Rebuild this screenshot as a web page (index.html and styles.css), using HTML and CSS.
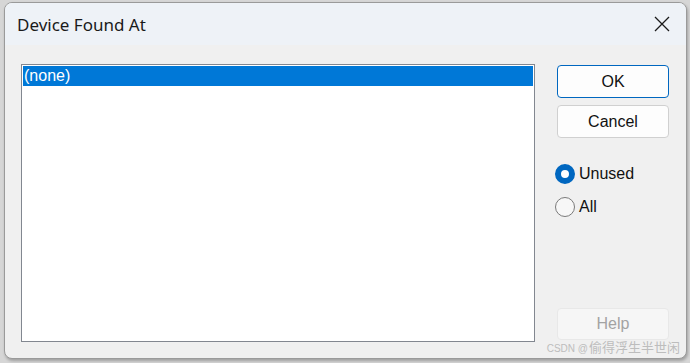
FILE: index.html
```html
<!DOCTYPE html>
<html lang="en">
<head>
    <meta charset="UTF-8">
    <title>Device Found At</title>
    <link rel="stylesheet" href="styles.css">
</head>
<body>
    <section class="window">
        <div class="title_bar">
            <span class="title">Device Found At</span>
            <button class="close" aria-label="Close">
                <svg width="16" height="16" viewBox="0 0 16 16">
                    <path d="M1 1 L15 15 M15 1 L1 15" stroke="#1a1a1a" stroke-width="1.3" fill="none"/>
                </svg>
            </button>
        </div>

        <div class="content">
            <div class="list_box">
                <div class="list_item selected">(none)</div>
            </div>

            <div class="side">
                <button class="btn default">OK</button>
                <button class="btn">Cancel</button>

                <div class="radios">
                    <label class="radio"><span class="dot checked"></span>Unused</label>
                    <label class="radio"><span class="dot"></span>All</label>
                </div>

                <button class="btn help" disabled>Help</button>
            </div>
        </div>

        <span class="watermark">CSDN @<span class="cjk">偷得浮生半世闲</span></span>
    </section>
</body>
</html>
```

FILE: styles.css
```css
*{
    margin: 0;
    padding: 0;
    box-sizing: border-box;
}

body{
    background: #d6d6d6;
    width: 690px;
    height: 363px;
    overflow: hidden;
    font-family: "Liberation Sans", Arial, sans-serif;
}

.window{
    position: relative;
    margin: 2px 0 0 4px;
    width: 683px;
    height: 357px;
    border: 1px solid #9a9a9a;
    border-radius: 8px;
    background: #f0f0f0;
    overflow: hidden;
    box-shadow: 1px 2px 3px rgba(0, 0, 0, 0.25);
}

.title_bar{
    height: 42px;
    background: #eef2f7;
    display: flex;
    align-items: center;
    justify-content: space-between;
    padding: 0 16px 0 12px;
}

.title{
    font-family: "Noto Sans", sans-serif;
    font-size: 17px;
    color: #1a1a1a;
    padding-top: 1px;
}

.close{
    border: none;
    background: none;
    width: 16px;
    height: 16px;
    display: flex;
}

.content{
    display: grid;
    grid-template-columns: 514px 112px;
    column-gap: 22px;
    padding: 19px 18px 16px 16px;
    height: 313px;
}

.list_box{
    border: 1px solid #828790;
    background: #ffffff;
    padding: 1px;
}

.list_item{
    height: 20px;
    line-height: 20px;
    font-size: 16px;
    color: #000;
    padding-left: 1px;
}

.list_item.selected{
    background: #0078d7;
    color: #ffffff;
}

.side{
    display: flex;
    flex-direction: column;
    padding-top: 1px;
    padding-bottom: 2px;
}

.btn{
    font-family: "Liberation Sans", Arial, sans-serif;
    font-size: 16px;
    color: #111;
    height: 33px;
    background: #fdfdfd;
    border: 1px solid #d0d0d0;
    border-radius: 4px;
}

.btn.default{
    border-color: #0067c0;
    margin-bottom: 7px;
}

.btn.help{
    margin-top: auto;
    height: 32px;
    background: #f6f6f6;
    border-color: #e8e8e8;
    color: #a3a3a3;
}

.radios{
    display: flex;
    flex-direction: column;
    row-gap: 13px;
    margin-top: 26px;
}

.radio{
    display: flex;
    align-items: center;
    font-size: 16px;
    color: #111;
    margin-left: -2px;
}

.dot{
    width: 20px;
    height: 20px;
    border-radius: 50%;
    border: 1px solid #7a7a7a;
    background: #f7f7f7;
    margin-right: 4px;
}

.dot.checked{
    border: 6px solid #0067c0;
    background: #ffffff;
}

.watermark{
    position: absolute;
    right: 6px;
    bottom: 2px;
    font-family: "Liberation Sans", sans-serif;
    font-size: 10px;
    color: #bdbdbd;
}

.cjk{
    font-family: "Noto Sans CJK SC", sans-serif;
    font-size: 13px;
    margin-left: 1px;
}
```
